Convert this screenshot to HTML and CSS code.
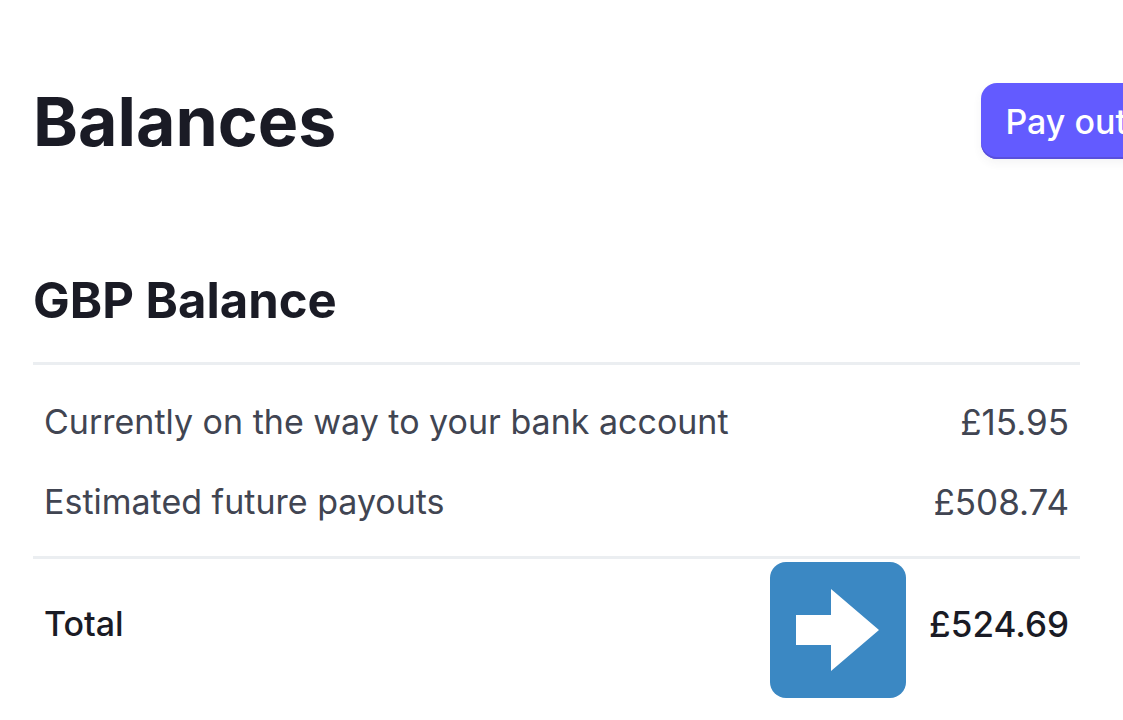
FILE: index.html
```html
<!DOCTYPE html>
<html lang="en">
<head>
<meta charset="utf-8">
<title>Balances</title>
<link rel="stylesheet" href="styles.css">
</head>
<body>
<main class="page">
  <header class="header">
    <h1 class="title">Balances</h1>
    <button class="payout" type="button">Pay out</button>
  </header>
  <section class="balance">
    <h2 class="subtitle">GBP Balance</h2>
    <table class="table">
      <tbody class="group">
        <tr><th scope="row">Currently on the way to your bank account</th><td>£15.95</td></tr>
        <tr><th scope="row">Estimated future payouts</th><td>£508.74</td></tr>
      </tbody>
      <tfoot class="total">
        <tr><th scope="row">Total</th><td><span class="amount"><svg class="arrow" viewBox="0 0 136 136" aria-hidden="true"><rect width="136" height="136" rx="16" fill="#3b88c3"/><path d="M26 53H61V27L109 68L61 109V83H26Z" fill="#fff"/></svg>£524.69</span></td></tr>
      </tfoot>
    </table>
  </section>
</main>
</body>
</html>
```
FILE: styles.css
```css
* { box-sizing: border-box; }
body {
  margin: 0;
  background: #fff;
  color: #1a1b25;
  font-family: Inter, "Liberation Sans", sans-serif;
  overflow-x: hidden;
}
.page { padding: 79px 43px 48px 33px; }
.header {
  display: flex;
  align-items: center;
  justify-content: space-between;
  margin-right: -71px;
}
.title {
  margin: 0;
  font-size: 68px;
  line-height: 84px;
  font-weight: 700;
}
.payout {
  height: 76px;
  padding: 0 24px;
  border: 0;
  border-radius: 16px;
  background: #635bff;
  box-shadow: inset 0 -2px #5a50db, 0 4px 10px #3c42570f;
  color: #fff;
  font: 500 34px Inter, "Liberation Sans", sans-serif;
}
.subtitle {
  margin: 109px 0 32px;
  font-size: 49px;
  line-height: 58px;
  font-weight: 700;
}
.table {
  width: 100%;
  border-collapse: collapse;
  font-size: 35px;
  line-height: 48px;
}
.group { border-top: 3px solid #ebeef1; color: #414552; }
.total { border-top: 3px solid #ebeef1; }
.table th,
.table td { padding: 16px 11px; }
.table th { font-size: 34px; font-weight: 400; text-align: left; }
.table td { text-align: right; }
.group tr:first-child > * { padding-top: 33px; }
.group tr:last-child > * { padding-bottom: 30px; }
.total tr > th,
.total tr > td { font-weight: 500; padding-top: 41px; }
.amount { position: relative; display: inline-block; }
.arrow {
  position: absolute;
  right: 100%;
  top: 50%;
  width: 136px;
  height: 136px;
  margin: -62px 23px 0 0;
}
```
